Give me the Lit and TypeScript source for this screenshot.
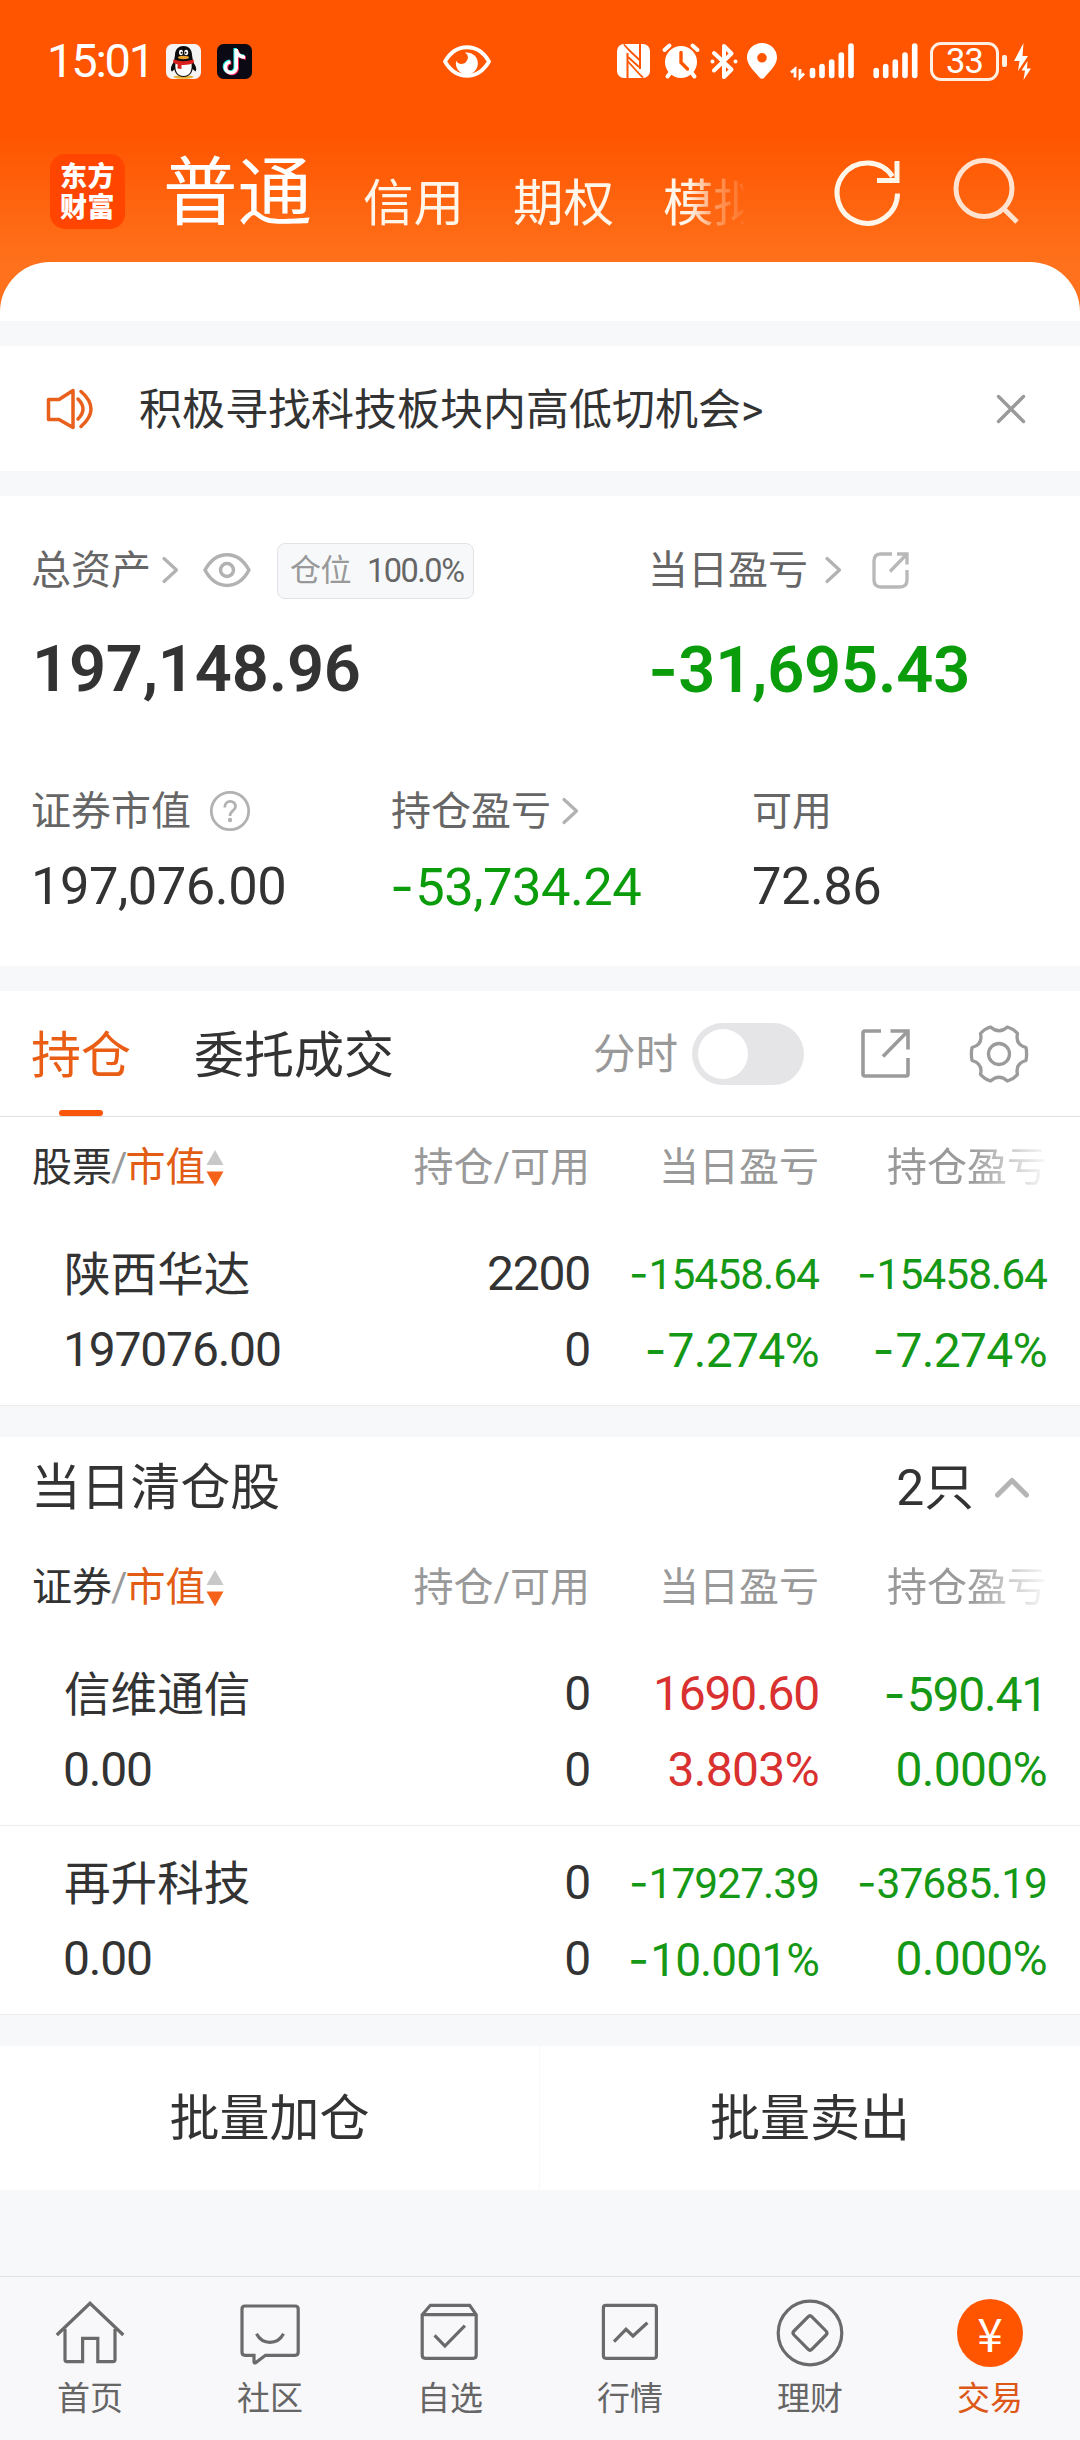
import { LitElement, html, css, svg, nothing } from "lit";
import { customElement, property } from "lit/decorators.js";
import { classMap } from "lit/directives/class-map.js";

type Tone = "up" | "down" | "flat";

interface Cell {
  text: string;
  tone?: Tone;
  size?: "sm" | "md";
}

interface Holding {
  name: string;
  value: string;
  top: Cell[];
  bottom: Cell[];
}

const HOLDINGS: Holding[] = [
  {
    name: "陕西华达",
    value: "197076.00",
    top: [{ text: "2200" }, { text: "-15458.64", tone: "down", size: "sm" }, { text: "-15458.64", tone: "down", size: "sm" }],
    bottom: [{ text: "0" }, { text: "-7.274%", tone: "down" }, { text: "-7.274%", tone: "down" }],
  },
];

const CLEARED: Holding[] = [
  {
    name: "信维通信",
    value: "0.00",
    top: [{ text: "0" }, { text: "1690.60", tone: "up" }, { text: "-590.41", tone: "down" }],
    bottom: [{ text: "0" }, { text: "3.803%", tone: "up" }, { text: "0.000%", tone: "down" }],
  },
  {
    name: "再升科技",
    value: "0.00",
    top: [{ text: "0" }, { text: "-17927.39", tone: "down", size: "sm" }, { text: "-37685.19", tone: "down", size: "sm" }],
    bottom: [{ text: "0" }, { text: "-10.001%", tone: "down", size: "md" }, { text: "0.000%", tone: "down" }],
  },
];

const shared = css`
  * { box-sizing: border-box; }
  svg { display: block; flex: none; overflow: visible; }
  .sign { font-family: Inter, sans-serif; letter-spacing: 0; }
`;

/** Number with a wide minus sign. */
const num = (t: string) =>
  t.startsWith("-") ? html`<span class="sign">-</span>${t.slice(1)}` : t;

const chevron = html`<svg width="17" height="28" viewBox="0 0 17 28" fill="none" stroke="#b2b2b2" stroke-width="3.2" stroke-linecap="round" stroke-linejoin="round"><path d="M2 2.5 14.5 14 2 25.5"/></svg>`;

@customElement("status-bar")
class StatusBar extends LitElement {
  static styles = [shared, css`
    :host { display: flex; height: 122px; padding: 0 49px 0 47px; align-items: center; color: #fff; }
    .time { font-size: 47px; line-height: 50px; letter-spacing: -2.2px; width: 119px; }
    .app { margin-right: 16px; }
    .eye { margin-left: 175px; }
    .nfc { margin-left: 126px; }
    .alarm { margin-left: 12px; }
    .bt { margin-left: 11px; }
    .pin { margin-left: 10px; }
    .sig1 { margin-left: 13px; }
    .sig2 { margin-left: 19px; }
    .battery { margin-left: 12px; width: 69px; height: 39px; border: 3px solid #ffeee2; border-radius: 11px; display: flex; align-items: center; justify-content: center; font-size: 34.500px; line-height: 33px; letter-spacing: -0.800px; }
    .nub { width: 5px; height: 12px; margin-left: 3px; border-radius: 2px; background: #ffeee2; }
    .bolt { margin-left: 7px; }
  `];
  render() {
    return html`
      <span class="time">15:01</span>
      <svg class="app" width="35" height="35" viewBox="0 0 35 35">
        <rect width="35" height="35" rx="6.5" fill="#f4f4f5"/>
        <ellipse cx="17.5" cy="33" rx="10" ry="1.8" fill="#e5b23c"/>
        <path d="M9 17C4 22 4.500 26.500 6 27.500L9 25 26.500 25 29.500 27.500C31 26 30.500 22 26 17Z" fill="#0c0c0e"/>
        <path d="M17.500 2C11.500 2 9 6.500 9 11L8 17C7 28 11 33 17.500 33S28 28 27 17L26 11C26 6.500 23.500 2 17.500 2Z" fill="#0c0c0e"/>
        <path d="M9.500 19C8.500 28 12 32 17.500 32S26.500 28 25.500 19Z" fill="#fff"/>
        <path d="M7.500 15.500Q17.500 19 27.500 15.500L28 19Q22 21.500 15.500 21V25L11.500 24.500 11.700 20.500 7 18.800Z" fill="#d8201f"/>
        <ellipse cx="15" cy="8.500" rx="2" ry="2.800" fill="#fff"/><ellipse cx="20.200" cy="8.500" rx="2" ry="2.800" fill="#fff"/>
        <circle cx="15.600" cy="8.800" r="1" fill="#111"/><circle cx="19.600" cy="8.800" r="1" fill="#111"/>
        <ellipse cx="17.500" cy="13.500" rx="5.500" ry="1.700" fill="#e8a12c"/>
      </svg>
      <svg class="app" width="35" height="35" viewBox="0 0 35 35">
        <rect width="35" height="35" rx="6.500" fill="#0b0a14"/>
        <g fill="none" stroke-width="3.600">
          <path d="M18.200 4V23.500A5.400 5.400 0 1 1 12.800 17.300M18.200 5C19 9.500 22.500 12 27 12.300" stroke="#25e8e6"/>
          <path d="M20.200 6V25A5.400 5.400 0 1 1 14.300 18.800M20.200 7C21 11.500 24.500 13.800 29 14" stroke="#f8245a"/>
          <path d="M19.200 5V24.200A5.400 5.400 0 1 1 13.500 18M19.200 6C20 10.500 23.500 13 28 13.200" stroke="#fff"/>
        </g>
      </svg>
      <svg class="eye" width="48" height="33" viewBox="0 0 48 33">
        <path d="M2 16.500C13-2.500 35-2.500 46 16.500 35 35.500 13 35.500 2 16.500Z" fill="none" stroke="#fff" stroke-width="3.800" stroke-linejoin="round"/>
        <path d="M23 7.500A11 11 0 1 1 13.300 15.500C13.800 19 20 20.500 23 17 25.500 14 26 10.500 22 7.500Z" fill="#fff"/>
      </svg>
      <svg class="nfc" width="33" height="34" viewBox="0 0 33 34">
        <rect width="33" height="34" rx="7" fill="#fff"/>
        <path d="M10.500 9V34M23 0V25" stroke="#ff5500" stroke-width="2"/>
        <path d="M7 0.500Q10 4 13 7L23 16.500M11 13 22 23M11 17.500 20 27.500Q23 31 26 33.500" fill="none" stroke="#ff5500" stroke-width="1.800"/>
      </svg>
      <svg class="alarm" width="38" height="36" viewBox="0 0 38 36">
        <g stroke="#fff" stroke-width="4" stroke-linecap="round"><path d="M2.500 7 7.500 2.500M35.500 7 30.500 2.500M9 29 5.500 33.500M29 29 32.500 33.500"/></g>
        <circle cx="19" cy="19" r="16" fill="#fff"/>
        <path d="M19 9.500V19.500L25.500 26" fill="none" stroke="#ff5500" stroke-width="3.400" stroke-linecap="round"/>
      </svg>
      <svg class="bt" width="26" height="37" viewBox="0 0 26 37" fill="none" stroke="#fff" stroke-width="4" stroke-linejoin="round" stroke-linecap="round">
        <path d="M3 10 20.500 26.500 13 34V3L20.500 10.500 3 27.500"/><path d="M1.500 18.500V18.510M24.500 18.500V18.510"/>
      </svg>
      <svg class="pin" width="30" height="36" viewBox="0 0 30 36"><path fill="#fff" fill-rule="evenodd" d="M15 0C6.500 0 0 6.500 0 14.500 0 22 8 29 12.500 34.500Q15 37 17.500 34.500C22 29 30 22 30 14.500 30 6.500 23.500 0 15 0ZM15 10A4.800 4.800 0 1 1 15 19.600 4.800 4.800 0 0 1 15 10Z"/></svg>
      <svg class="sig1" width="64" height="36" viewBox="0 0 64 36">
        <g stroke="#fff" stroke-width="5.600" stroke-linecap="round"><path d="M22.500 27.500V32.500M32 23.500V32.500M41.700 19V32.500M51.300 12V32.500M61 3V32.500"/></g>
        <path d="M5 34.500V26L1 29.500M10 26V34.500L14 30.500" fill="none" stroke="#fff" stroke-width="2.800"/>
      </svg>
      <svg class="sig2" width="45" height="36" viewBox="0 0 45 36">
        <g stroke="#fff" stroke-width="5.600" stroke-linecap="round"><path d="M3.200 27.500V32.500M12.700 23.500V32.500M22.300 19V32.500M32 12V32.500M41.700 3V32.500"/></g>
      </svg>
      <span class="battery">33</span><span class="nub"></span>
      <svg class="bolt" width="17" height="37" viewBox="0 0 17 37" fill="#fff"><path d="M9.500 0 0 18H5.500L4 28 14 13H8.500ZM13.500 18 7.500 27.500H11L9.500 37 17 25.500H13Z"/></svg>
    `;
  }
}

@customElement("account-tabs")
class AccountTabs extends LitElement {
  static styles = [shared, css`
    :host { display: flex; height: 140px; padding-left: 50px; color: #fff; }
    .logo { width: 75px; height: 75px; margin-top: 32px; border-radius: 15px; background: #ff4500; font-weight: 900; font-size: 27px; line-height: 31px; padding: 5px 0 0 10px; letter-spacing: 0.5px; font-family: "Noto Sans CJK SC", sans-serif; white-space: pre-line; }
    .tabs { width: 606px; margin-left: 38px; display: flex; gap: 49px; white-space: nowrap; font-size: 50.500px; line-height: 60px; padding-top: 52px; color: #fff5e9; -webkit-mask-image: linear-gradient(90deg, #000 526px, rgba(0,0,0,.35) 555px, rgba(0,0,0,.12) 579px, transparent 581px); mask-image: linear-gradient(90deg, #000 526px, rgba(0,0,0,.35) 555px, rgba(0,0,0,.12) 579px, transparent 581px); }
    .on { font-size: 74.500px; color: #fff; margin: -10px 2px 0 0; }
    .refresh { margin: 34px 0 0 66px; }
    .search { margin: 36px 0 0 53px; }
  `];
  render() {
    return html`
      <div class="logo">东方
财富</div>
      <div class="tabs"><span class="on">普通</span><span>信用</span><span>期权</span><span>模拟</span></div>
      <svg class="refresh" width="66" height="68" viewBox="0 0 66 68" fill="none" stroke="#fff6ea" stroke-width="5">
        <path d="M62.500 37.500A30.200 30.200 0 1 1 57.500 20.500"/><path d="M62 5V24.500H42"/>
      </svg>
      <svg class="search" width="66" height="68" viewBox="0 0 66 68" fill="none" stroke="#ffe3d0" stroke-width="5">
        <circle cx="30" cy="30.500" r="28"/><path d="M49.500 50.500 63 64"/>
      </svg>
    `;
  }
}

@customElement("asset-summary")
class AssetSummary extends LitElement {
  static styles = [shared, css`
    :host { display: block; height: 470px; padding: 44px 32px 0 31px; background: #fff; color: #333; }
    .main { display: grid; grid-template-columns: 617px 1fr; }
    .sub { display: grid; grid-template-columns: 360px 361px 1fr; margin-top: 71px; }
    .label { display: flex; align-items: center; height: 60px; font-size: 40px; line-height: 60px; color: #666; }
    .label .t { padding-top: 2px; }
    .total { font-size: 65px; line-height: 80px; font-weight: 600; margin-top: 29px; padding-left: 1px; letter-spacing: -0.2px; white-space: nowrap; }
    .total.down { padding-left: 0; }
    .value { font-size: 52.500px; line-height: 60px; margin-top: 15px; letter-spacing: -0.500px; white-space: nowrap; }
    .down { color: #0a9c0a; }
    .value .sign { margin-right: 1px; margin-left: -1px; }
    .badge { display: flex; align-items: center; width: 197px; height: 56px; margin: 1px 0 0 26px; border: 1px solid #e2e3e6; border-radius: 8px; background: #f7f8fa; font-size: 32.500px; line-height: 54px; padding-left: 12px; letter-spacing: -1.500px; }
    .badge .k { font-size: 31px; color: #999; margin-right: 16px; letter-spacing: -0.500px; }
    .c1 { margin-left: 11px; display: flex; } .c2 { margin-left: 17px; display: flex; }
    .eye { margin-left: 24px; }
    .share { margin-left: 30px; }
    .help { margin-left: 18px; }
  `];
  render() {
    return html`
      <div class="main">
        <div>
          <div class="label"><span class="t">总资产</span><span class="c1">${chevron}</span>
            <svg class="eye" width="48" height="34" viewBox="0 0 48 34" fill="none" stroke="#b2b2b2" stroke-width="3.500" stroke-linejoin="round"><path d="M2 17C13-3.500 35-3.500 46 17 35 37.500 13 37.500 2 17Z"/><circle cx="24" cy="17" r="6.500"/></svg>
            <span class="badge"><span class="k">仓位</span>100.0%</span>
          </div>
          <div class="total">197,148.96</div>
        </div>
        <div>
          <div class="label"><span class="t">当日盈亏</span><span class="c2">${chevron}</span>
            <svg class="share" width="37" height="37" viewBox="0 0 37 37" fill="none" stroke="#b8b8b8" stroke-width="3.300"><path d="M20 2H9Q2 2 2 9V28Q2 35 9 35H28Q35 35 35 28V18"/><path d="M25 2H35V12.500M34.500 2.500 18 19.500"/></svg>
          </div>
          <div class="total down">${num("-31,695.43")}</div>
        </div>
      </div>
      <div class="sub">
        <div>
          <div class="label"><span class="t">证券市值</span>
            <svg class="help" width="42" height="42" viewBox="0 0 42 42"><circle cx="21" cy="21" r="18.700" fill="none" stroke="#b2b2b2" stroke-width="2.800"/><path d="M15.700 17.500C15.700 9.500 26.500 9.500 26.500 16.500 26.500 21 21 20.500 21 26" fill="none" stroke="#b2b2b2" stroke-width="2.800"/><circle cx="21" cy="30" r="2.200" fill="#b2b2b2"/></svg>
          </div>
          <div class="value">197,076.00</div>
        </div>
        <div>
          <div class="label"><span class="t">持仓盈亏</span><span class="c1">${chevron}</span></div>
          <div class="value down">${num("-53,734.24")}</div>
        </div>
        <div>
          <div class="label"><span class="t">可用</span></div>
          <div class="value">72.86</div>
        </div>
      </div>
    `;
  }
}

@customElement("holding-table")
class HoldingTable extends LitElement {
  @property() head = "";
  @property({ attribute: false }) rows: Holding[] = [];

  static styles = [shared, css`
    :host { display: block; background: #fff; color: #333; }
    .grid { display: grid; grid-template-columns: 350px 240px 229px 228px; text-align: right; white-space: nowrap; }
    .grid > :first-child { text-align: left; }
    .head { height: 100px; align-items: center; color: #999; font-size: 40px; line-height: 60px; padding-top: 2px; }
    .key { display: flex; padding-left: 32px; align-items: center; }
    .key b { font-weight: inherit; color: #333; }
    .key i { font-style: normal; color: #e25c14; }
    .slash { margin: 0 -2px 0 -1px; font-size: 40px; }
    .fade { -webkit-mask-image: linear-gradient(90deg, #000 66%, rgba(0,0,0,.05) 100%); mask-image: linear-gradient(90deg, #000 66%, rgba(0,0,0,.05) 100%); }
    .row { height: 189px; padding-top: 19px; grid-template-rows: 76px 76px; align-items: center; border-bottom: 1px solid #ececee; font-size: 48px; letter-spacing: -1.200px; line-height: 60px; }
    .row > * { text-align: right; }
    .row > .name, .row > .val { text-align: left; }
    .row > .name { font-size: 46.600px; letter-spacing: 0; padding: 1px 0 0 64px; }
    .val { padding-left: 63px; }
    .sm { font-size: 42.500px; letter-spacing: -1px; }
    .pct { letter-spacing: -0.700px; }
    .md { font-size: 46px; letter-spacing: -0.900px; }
    .row .sign { margin-right: 1px; }
    .row .sm .sign { margin-right: 0; }
    .up { color: #d93030; }
    .down { color: #159815; }
  `];

  private cell(c: Cell) {
    return html`<span class=${classMap({ up: c.tone === "up", down: c.tone === "down", pct: c.text.endsWith("%"), sm: c.size === "sm", md: c.size === "md" })}>${num(c.text)}</span>`;
  }

  render() {
    return html`
      <div class="grid head">
        <span class="key"><b>${this.head}</b><span class="slash">/</span><i>市值</i>
          <svg width="18" height="37" viewBox="0 0 18 37"><path d="M9 0 17.500 15H.500Z" fill="#c8c8c8"/><path d="M9 36.500 17.500 21.500H.500Z" fill="#f5631b"/></svg>
        </span>
        <span>持仓/可用</span><span>当日盈亏</span><span class="fade">持仓盈亏</span>
      </div>
      ${this.rows.map((r) => html`
        <div class="grid row">
          <span class="name">${r.name}</span>${r.top.map((c) => this.cell(c))}
          <span class="val">${r.value}</span>${r.bottom.map((c) => this.cell(c))}
        </div>`)}
    `;
  }
}

const NAV = [
  { label: "首页", icon: svg`<path d="M2.800 38 36 6.300 69.300 38M11 32V62.500Q11 64.700 13 64.700H28.600V41.300H43.800V64.700H59Q61 64.700 61 62.500V32"/>` },
  { label: "社区", icon: svg`<path d="M20 58.300H11Q8 58.300 8 55.300V12Q8 9 11 9H61Q64.200 9 64.200 12V55.300Q64.200 58.300 61 58.300H31.500L21.500 65.800Q20 66.500 20 64.500ZM22.500 36.700Q27 45.300 36 45.300T49.500 36.700"/>` },
  { label: "自选", icon: svg`<path d="M8.200 17.700 16.400 8.300H55.700L62.200 17.700V58.300Q62.200 61.300 59.200 61.300H11.200Q8.200 61.300 8.200 58.300ZM8.200 17.700H62.200M20.600 38.300 30.900 49 50.900 28.700"/>` },
  { label: "行情", icon: svg`<rect x="9.400" y="8.300" width="53" height="53" rx="2.500"/><path d="M20 44.700 32 32.300 39 39 53.400 25.700"/>` },
  { label: "理财", icon: svg`<circle cx="36" cy="36" r="31.800"/><path d="M34 19.800Q36 17.800 38 19.800L52 34Q54 36 52 38L38 52.200Q36 54.200 34 52.200L20 38Q18 36 20 34Z"/>` },
  { label: "交易", icon: nothing },
];

@customElement("bottom-nav")
class BottomNav extends LitElement {
  static styles = [shared, css`
    :host { display: grid; grid-template-columns: repeat(6, 1fr); height: 164px; border-top: 1px solid #e1e2e4; background: #f8f8fa; }
    .item { display: flex; flex-direction: column; align-items: center; padding-top: 20px; color: #666; font-size: 33px; line-height: 44px; }
    .item span { margin-top: 8px; }
    .active { color: #dd5716; }
    .coin { width: 66px; height: 68px; margin: 2px 0; border-radius: 50%; background: #ff5500; color: #fff; font-family: "Noto Sans CJK SC", sans-serif; font-size: 46px; line-height: 66px; text-align: center; }
  `];
  render() {
    return NAV.map((n) => html`
      <div class=${classMap({ item: true, active: n.icon === nothing })}>
        ${n.icon === nothing
          ? html`<div class="coin">¥</div>`
          : html`<svg width="72" height="72" viewBox="0 0 72 72" fill="none" stroke="#6a6a6a" stroke-width="3.200">${n.icon}</svg>`}
        <span>${n.label}</span>
      </div>`);
  }
}

@customElement("app-root")
class AppRoot extends LitElement {
  static styles = [shared, css`
    :host { display: flex; flex-direction: column; width: 1080px; height: 2440px; overflow: hidden; background: #f7f8fa; font-family: Roboto, "Noto Sans CJK SC", sans-serif; color: #333; }
    .hero { height: 321px; background: linear-gradient(#ff5500 135px, #ff711c 265px, #ff711c); display: flex; flex-direction: column; }
    .sheet { flex: 1; border-radius: 50px 50px 0 0; background: #fff; }
    .notice { display: flex; align-items: center; height: 125px; margin-top: 25px; padding: 0 54px 0 46px; background: #fff; font-size: 43px; line-height: 60px; }
    .notice span { flex: 1; margin-left: 45px; padding-top: 3px; }
    .summary { margin-top: 25px; }
    .tabs { display: flex; align-items: center; height: 126px; margin-top: 25px; padding-left: 31px; background: #fff; border-bottom: 1px solid #e0e0e2; font-size: 50px; line-height: 60px; }
    .tab { display: flex; flex-direction: column; align-items: center; height: 125px; padding-top: 35px; margin-right: 63px; }
    .tab.on { color: #e95d15; }
    .tab.on::after { content: ""; width: 44px; height: 6px; margin-top: 24px; border-radius: 3px; background: #f9560c; }
    .mini { margin-left: 136px; font-size: 42.500px; color: #999; padding-top: 2px; }
    .switch { width: 112px; height: 62px; margin-left: 14px; padding: 6px; border-radius: 31px; background: #e5e5e7; }
    .knob { width: 50px; height: 50px; border-radius: 50%; background: #fff; }
    .share { margin-left: 57px; }
    .gear { margin-left: 60px; }
    .title { display: flex; align-items: center; height: 100px; margin-top: 31px; padding: 2px 50px 0 31px; background: #fff; font-size: 49.800px; line-height: 60px; }
    .title .n { margin-left: auto; margin-right: 20px; }
    .actions { display: grid; grid-template-columns: 539px 1fr; gap: 1px; height: 144px; margin-top: 31px; }
    .actions div { background: #fff; text-align: center; font-size: 50px; line-height: 60px; padding-top: 43px; height: 144px; }
    .nav { margin-top: auto; }
  `];
  render() {
    return html`
      <div class="hero">
        <status-bar></status-bar>
        <account-tabs></account-tabs>
        <div class="sheet"></div>
      </div>
      <div class="notice">
        <svg width="48" height="42" viewBox="0 0 48 42" fill="none" stroke="#e8601c" stroke-width="3.500" stroke-linecap="round" stroke-linejoin="round"><path d="M2.500 11.500H13L27 2.500V39.500L13 31.500H2.500ZM32 11Q42 21 32 31M35 3.500Q55 21 35 38.500"/></svg>
        <span>积极寻找科技板块内高低切机会&gt;</span>
        <svg width="30" height="30" viewBox="0 0 30 30" stroke="#9a9a9a" stroke-width="3.400" stroke-linecap="round"><path d="M2.500 2.500 27.500 27.500M27.500 2.500 2.500 27.500"/></svg>
      </div>
      <asset-summary class="summary"></asset-summary>
      <div class="tabs">
        <div class="tab on">持仓</div>
        <div class="tab">委托成交</div>
        <span class="mini">分时</span>
        <div class="switch"><div class="knob"></div></div>
        <svg class="share" width="49" height="49" viewBox="0 0 49 49" fill="none" stroke="#9b9b9b" stroke-width="3.600"><path d="M20 2H4Q2 2 2 4V45Q2 47 4 47H45Q47 47 47 45V29"/><path d="M29.500 2H47V20.500M46.500 2.500 22 27.500"/></svg>
        <svg class="gear" width="58" height="58" viewBox="0 0 58 58" fill="none" stroke="#9b9b9b" stroke-width="3.300" stroke-linejoin="round"><circle cx="29" cy="29" r="10.500"/><path d="M20.500 2Q29 9.500 37.500 2Q43 3.500 47.500 8.500Q45 19.500 56 22.500Q57.200 29 56 35.500Q45 38.500 47.500 49.500Q43 54.500 37.500 56Q29 48.500 20.500 56Q15 54.500 10.500 49.500Q13 38.500 2 35.500Q.800 29 2 22.500Q13 19.500 10.500 8.500Q15 3.500 20.500 2Z"/></svg>
      </div>
      <holding-table .head=${"股票"} .rows=${HOLDINGS}></holding-table>
      <div class="title">当日清仓股<span class="n">2只</span>
        <svg width="36" height="22" viewBox="0 0 36 22" fill="none" stroke="#b5b5b5" stroke-width="5" stroke-linecap="round" stroke-linejoin="round"><path d="M3.500 18 18 3.500 32.500 18"/></svg>
      </div>
      <holding-table .head=${"证券"} .rows=${CLEARED}></holding-table>
      <div class="actions"><div>批量加仓</div><div>批量卖出</div></div>
      <bottom-nav class="nav"></bottom-nav>
    `;
  }
}
